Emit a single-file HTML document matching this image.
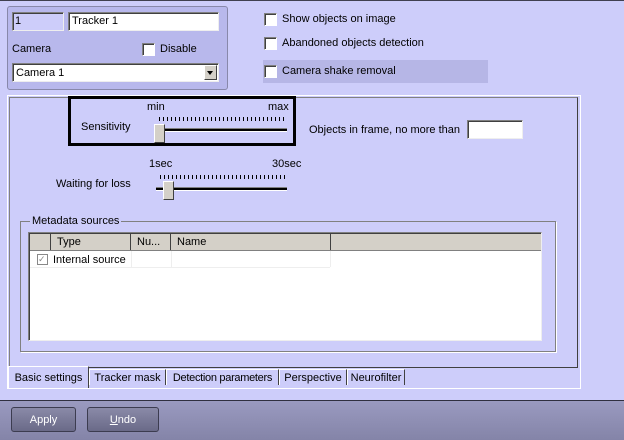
<!DOCTYPE html><html><head><style>
body{margin:0;width:624px;height:439px;background:#cdcdfa;font-family:"Liberation Sans",sans-serif;font-size:11px;color:#000;position:relative;overflow:hidden}
.a{position:absolute}
.cb{position:absolute;width:11px;height:11px;background:#fff;border:1px solid #808080;border-right-color:#fff;border-bottom-color:#fff;box-shadow:inset 1px 1px 0 #404040}
.in{position:absolute;background:#fff;border:1px solid #808080;border-right-color:#eee;border-bottom-color:#eee;box-shadow:inset 1px 1px 0 #404040}
.tab{position:absolute;top:369px;height:16px;border:1px solid #fff;border-right:1px solid #404040;border-bottom:none;text-align:center;line-height:17px;background:#cdcdfa;box-sizing:border-box}
.btn{position:absolute;top:407px;height:25px;background:linear-gradient(#8a8aa8,#6a6a88);border:1px solid #3c3c50;border-radius:3px;color:#fff;text-align:center;line-height:25px;box-sizing:border-box}
.ticks{position:absolute;height:4px;background:repeating-linear-gradient(90deg,#000 0 1px,transparent 1px 4px)}
</style></head><body>
<div class="a" style="left:0;top:0;width:624px;height:1px;background:#404050"></div>
<div class="a" style="left:7px;top:6px;width:219px;height:82px;border:1px solid #8888aa;border-radius:3px;background:#b8b8ec"></div>
<div class="in" style="left:12px;top:12px;width:50px;height:17px;background:#cdcdfa"><span class="a" style="left:2px;top:2px">1</span></div>
<div class="in" style="left:68px;top:12px;width:149px;height:17px"><span class="a" style="left:3px;top:2px">Tracker 1</span></div>
<div class="a" style="left:12px;top:43px">Camera</div>
<div class="cb" style="left:142px;top:43px"></div><div class="a" style="left:160px;top:43px">Disable</div>
<div class="in" style="left:12px;top:63px;width:205px;height:17px"><span class="a" style="left:3px;top:3px">Camera 1</span>
<div class="a" style="right:1px;top:1px;width:13px;height:15px;background:#d4d0c8;border:1px solid #fff;border-right-color:#404040;border-bottom-color:#404040;box-sizing:border-box"><div class="a" style="left:2px;top:5px;border:3px solid transparent;border-top:4px solid #000"></div></div></div>
<div class="cb" style="left:264px;top:13px"></div><div class="a" style="left:282px;top:13px">Show objects on image</div>
<div class="cb" style="left:264px;top:37px"></div><div class="a" style="left:282px;top:37px">Abandoned objects detection</div>
<div class="a" style="left:263px;top:60px;width:225px;height:23px;background:#b6b6e6"></div>
<div class="cb" style="left:264px;top:65px"></div><div class="a" style="left:282px;top:65px">Camera shake removal</div>
<div class="a" style="left:7px;top:95px;width:572px;height:293px;border:1px solid #fff;border-bottom:none"></div>
<div class="a" style="left:9px;top:97px;width:567px;height:269px;border:1px solid #808080;border-right-color:#404040;border-bottom-color:#404040"></div>
<div class="a" style="left:68px;top:96px;width:228px;height:50px;border:3px solid #000;box-sizing:border-box"></div>
<div class="a" style="left:147px;top:101px">min</div><div class="a" style="left:268px;top:101px">max</div>
<div class="a" style="left:81px;top:121px">Sensitivity</div>
<div class="ticks" style="left:159px;top:117px;width:126px"></div>
<div class="a" style="left:160px;top:128px;width:127px;height:2px;border-top:1px solid #808080;border-bottom:1px solid #fff;background:#000"></div>
<div class="a" style="left:154px;top:124px;width:9px;height:17px;background:#d4d0c8;border:1px solid #fff;border-right-color:#404040;border-bottom-color:#404040"></div>
<div class="a" style="left:149px;top:158px">1sec</div><div class="a" style="left:272px;top:158px">30sec</div>
<div class="a" style="left:56px;top:178px">Waiting for loss</div>
<div class="ticks" style="left:160px;top:175px;width:125px"></div>
<div class="a" style="left:156px;top:187px;width:131px;height:2px;border-top:1px solid #808080;border-bottom:1px solid #fff;background:#000"></div>
<div class="a" style="left:163px;top:181px;width:9px;height:17px;background:#d4d0c8;border:1px solid #fff;border-right-color:#404040;border-bottom-color:#404040"></div>
<div class="a" style="left:309px;top:124px">Objects in frame, no more than</div>
<div class="in" style="left:467px;top:120px;width:54px;height:17px"></div>
<div class="a" style="left:20px;top:221px;width:534px;height:129px;border:1px solid #808080;box-shadow:1px 1px 0 #fff"></div>
<div class="a" style="left:30px;top:215px;background:#cdcdfa;padding:0 2px">Metadata sources</div>
<div class="in" style="left:28px;top:232px;width:512px;height:107px"></div>
<div class="a" style="left:30px;top:234px;width:511px;height:16px;background:#d4d0c8;border-bottom:1px solid #808080"></div>
<div class="a" style="left:50px;top:234px;width:1px;height:16px;background:#404040"></div>
<div class="a" style="left:130px;top:234px;width:1px;height:16px;background:#404040"></div>
<div class="a" style="left:170px;top:234px;width:1px;height:16px;background:#404040"></div>
<div class="a" style="left:330px;top:234px;width:1px;height:16px;background:#404040"></div>
<div class="a" style="left:57px;top:236px">Type</div><div class="a" style="left:137px;top:236px">Nu...</div><div class="a" style="left:177px;top:236px">Name</div>
<div class="a" style="left:37px;top:254px;width:9px;height:9px;border:1px solid #888;font-size:9px;line-height:9px;color:#888;background:#fff">✓</div>
<div class="a" style="left:53px;top:254px">Internal source</div>
<div class="a" style="left:30px;top:267px;width:300px;height:1px;background:#eee"></div>
<div class="a" style="left:131px;top:251px;width:1px;height:16px;background:#eee"></div>
<div class="a" style="left:171px;top:251px;width:1px;height:16px;background:#eee"></div>
<div class="a" style="left:330px;top:251px;width:1px;height:16px;background:#eee"></div>
<div class="tab" style="left:8px;top:366px;width:81px;height:22px;z-index:2;line-height:22px">Basic settings</div>
<div class="tab" style="left:89px;width:77px">Tracker mask</div>
<div class="tab" style="left:166px;width:113px;letter-spacing:-0.3px">Detection parameters</div>
<div class="tab" style="left:279px;width:68px">Perspective</div>
<div class="tab" style="left:347px;width:58px">Neurofilter</div>
<div class="a" style="left:7px;top:388px;width:573px;height:1px;background:#fff"></div>
<div class="a" style="left:0;top:400px;width:624px;height:39px;background:linear-gradient(#9a9ac0,#8484a8);border-top:1px solid #303040"></div>
<div class="btn" style="left:11px;width:65px">Apply</div>
<div class="btn" style="left:87px;width:72px"><u>U</u>ndo</div>
</body></html>
